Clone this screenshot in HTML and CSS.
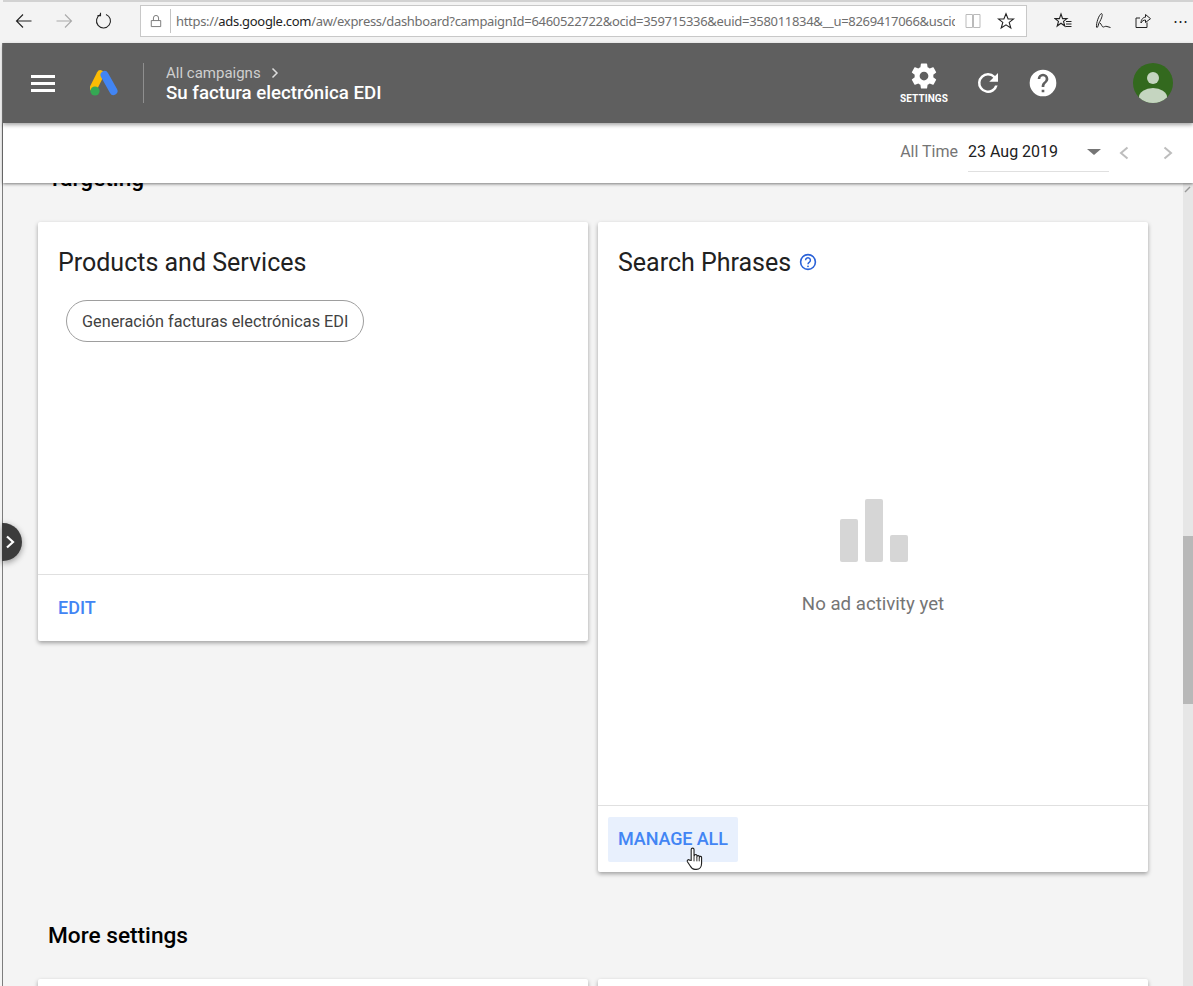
FILE: index.html
```html
<!DOCTYPE html>
<html lang="en">
<head>
<meta charset="utf-8">
<title>Su factura electrónica EDI</title>
<link rel="stylesheet" href="styles.css">
</head>
<body>
<div class="window">
  <div class="tabstrip"></div>
  <div class="toolbar">
    <div class="nav">
      <svg class="nav-icon" viewBox="0 0 18 18"><path d="M16.5 9H1.5M8 2.5L1.500 9L8 15.5" fill="none" stroke="#222" stroke-width="1.1"/></svg>
      <svg class="nav-icon" viewBox="0 0 18 18"><path d="M1.5 9H16.5M10 2.5L16.5 9L10 15.5" fill="none" stroke="#aaa" stroke-width="1.1"/></svg>
      <svg class="nav-icon" viewBox="0 0 18 18"><path d="M5.500 2.600A7 7 0 1 0 11 2.400M5.500 0.800V3.600H2.500" fill="none" stroke="#222" stroke-width="1.1"/></svg>
    </div>
    <div class="address">
      <svg class="lock" viewBox="0 0 14 16"><path d="M1.500 7.500H12.500V14.500H1.500ZM4 7.500V4.500A3 3 0 0 1 10 4.500V7.500" fill="none" stroke="#777" stroke-width="1.1"/></svg>
      <div class="url"><span class="url-dim">https://</span>ads.google.com<span class="url-dim">/aw/express/dashboard?campaignId=6460522722&amp;ocid=359715336&amp;euid=358011834&amp;__u=8269417066&amp;uscic</span></div>
      <svg class="book" viewBox="0 0 16 16"><path d="M1 1.500H7.500V14.500H1ZM8.500 1.500H15V14.500H8.500Z" fill="none" stroke="#bbb" stroke-width="1"/></svg>
      <svg class="star" viewBox="0 0 18 18"><path d="M9 1.800L11.100 7H16.600L12.200 10.400L13.800 16L9 12.800L4.200 16L5.800 10.400L1.400 7H6.900Z" fill="none" stroke="#222" stroke-width="1.1"/></svg>
    </div>
    <div class="tools">
      <svg class="tool" viewBox="0 0 18 18"><path d="M7 2L8.600 6.600H13L9.500 9.400L10.800 14L7 11.200L3.200 14L4.500 9.400L1 6.600H5.400Z" fill="none" stroke="#222" stroke-width="1.1"/><path d="M12 9.500H17.500M12 12H17.500M11.500 14.500H17.500" stroke="#222" stroke-width="1"/></svg>
      <svg class="tool" viewBox="0 0 18 18"><path d="M2.500 15.500C2 11 5 2.500 7.500 1.500C9 2 8 6 5 11L3.500 15.500M6 11C7.500 12 8 15.500 9.500 15C11 14.500 11.500 14 13 14.500L16.500 15.500" fill="none" stroke="#222" stroke-width="1"/></svg>
      <svg class="tool" viewBox="0 0 18 18"><path d="M13 10.500V15.500H2V6H6M7 11C7 7 9.500 5.200 11.500 5.200V2.500L16.500 6.700L11.500 10.500V8C9.500 8 8 9 7 11Z" fill="none" stroke="#222" stroke-width="1"/></svg>
      <span class="more">⋯</span>
    </div>
  </div>

  <div class="main">
    <header class="appbar">
      <button class="menu" type="button" aria-label="Menu"><span></span><span></span><span></span></button>
      <svg class="logo" viewBox="0 0 28 26">
        <path d="M10.500 4L3.500 18" stroke="#fbbc04" stroke-width="7.5" stroke-linecap="round"/>
        <path d="M14.500 5L23.500 21" stroke="#4285f4" stroke-width="8" stroke-linecap="round"/>
        <circle cx="5" cy="21" r="4.6" fill="#34a853"/>
      </svg>
      <div class="crumbs">
        <div class="crumb-top">All campaigns <svg class="crumb-chev" viewBox="0 0 8 12"><path d="M1.500 1.500L6 6L1.500 10.500" fill="none" stroke="#ddd" stroke-width="1.5"/></svg></div>
        <div class="crumb-title">Su factura electrónica EDI</div>
      </div>
      <div class="actions">
        <div class="settings">
          <svg class="gear" viewBox="0 0 24 24"><path fill="#fff" d="M19.43 12.98c.04-.32.07-.64.07-.98s-.03-.66-.07-.98l2.11-1.65c.19-.15.24-.42.12-.64l-2-3.46c-.12-.22-.39-.3-.61-.22l-2.49 1c-.52-.4-1.08-.73-1.69-.98l-.38-2.65C14.46 2.18 14.25 2 14 2h-4c-.25 0-.46.18-.49.42l-.38 2.65c-.61.25-1.17.59-1.69.98l-2.49-1c-.23-.09-.49 0-.61.22l-2 3.46c-.13.22-.07.49.12.64l2.11 1.65c-.04.32-.07.65-.07.98s.03.66.07.98l-2.11 1.65c-.19.15-.24.42-.12.64l2 3.46c.12.22.39.3.61.22l2.49-1c.52.4 1.08.73 1.69.98l.38 2.65c.03.24.24.42.49.42h4c.25 0 .46-.18.49-.42l.38-2.65c.61-.25 1.17-.59 1.69-.98l2.49 1c.23.09.49 0 .61-.22l2-3.46c.12-.22.07-.49-.12-.64l-2.11-1.65zM12 15.500c-1.93 0-3.5-1.57-3.5-3.5s1.57-3.5 3.500-3.500 3.500 1.570 3.500 3.500-1.570 3.500-3.500 3.500z"/></svg>
          <span class="settings-label">SETTINGS</span>
        </div>
        <svg class="refresh" viewBox="0 0 24 24"><path fill="#fff" d="M17.65 6.35A7.95 7.95 0 0 0 12 4a8 8 0 1 0 7.73 10h-2.08A6 6 0 1 1 12 6c1.66 0 3.14.69 4.22 1.78L13 11h7V4l-2.35 2.35z"/></svg>
        <svg class="help" viewBox="0 0 24 24"><path fill="#fff" d="M12 2a10 10 0 1 0 0 20 10 10 0 0 0 0-20zm1 17h-2v-2h2v2zm2.07-7.750l-.9.920C13.450 12.900 13 13.500 13 15h-2v-.5c0-1.100.450-2.100 1.170-2.830l1.240-1.260c.370-.360.590-.860.590-1.410a2 2 0 0 0-4 0H8a4 4 0 0 1 8 0c0 .880-.360 1.680-.930 2.250z"/></svg>
        <div class="avatar"><span class="avatar-head"></span><span class="avatar-body"></span></div>
      </div>
    </header>

    <div class="datebar">
      <span class="range-label">All Time</span>
      <div class="date-select"><span>23 Aug 2019</span><span class="caret"></span></div>
      <svg class="pager" viewBox="0 0 12 16"><path d="M9.500 2.500L3 8L9.500 13.500" fill="none" stroke="#bdbdbd" stroke-width="2"/></svg>
      <svg class="pager pager-next" viewBox="0 0 12 16"><path d="M2.500 2.500L9 8L2.500 13.500" fill="none" stroke="#bdbdbd" stroke-width="2"/></svg>
    </div>

    <div class="viewport">
      <div class="content">
        <h2 class="section-title section-first">Targeting</h2>
        <div class="cards">
          <section class="card card-left">
            <div class="card-body">
              <h3 class="card-title">Products and Services</h3>
              <span class="chip">Generación facturas electrónicas EDI</span>
            </div>
            <div class="card-foot"><a class="action">EDIT</a></div>
          </section>
          <section class="card card-right">
            <div class="card-body">
              <h3 class="card-title">Search Phrases
                <svg class="info" viewBox="0 0 18 18"><circle cx="9" cy="9" r="7.4" fill="none" stroke="#2a62d8" stroke-width="1.6"/><path d="M6.600 7.200a2.400 2.400 0 1 1 3.800 2C9.500 9.800 9 10.300 9 11.300" fill="none" stroke="#2a62d8" stroke-width="1.500"/><circle cx="9" cy="13.300" r=".9" fill="#2a62d8"/></svg>
              </h3>
              <div class="empty">
                <div class="bars"><span class="bar bar-a"></span><span class="bar bar-b"></span><span class="bar bar-c"></span></div>
                <p class="empty-text">No ad activity yet</p>
              </div>
            </div>
            <div class="card-foot card-foot-btn">
              <a class="action action-hover">MANAGE ALL
                <svg class="cursor" viewBox="0 0 18 26"><path d="M5.500 15V3.500a1.500 1.500 0 0 1 3 0V11l.5-1.500a1.400 1.400 0 0 1 2.500 0l.2 1a1.300 1.300 0 0 1 2.300.2l.2.8a1.200 1.200 0 0 1 2.300.5V18c0 3.500-2 6.500-5.500 6.500H9.500C7 24.500 5.500 23 4.500 21L1.500 16.500c-.8-1.500 1-3 2.300-1.700Z" fill="#fff" stroke="#222" stroke-width="1.200"/><path d="M8.500 11v5M11.500 11v5M14 12v4" stroke="#222" stroke-width="1"/></svg>
              </a>
            </div>
          </section>
        </div>
        <h2 class="section-title section-more">More settings</h2>
        <div class="cards">
          <section class="card card-stub"></section>
          <section class="card card-stub"></section>
        </div>
      </div>
      <div class="scrollbar">
        <svg class="scroll-arrow" viewBox="0 0 10 10"><path d="M2 7L7 2" stroke="#999" stroke-width="1.500"/></svg>
        <div class="scroll-thumb"></div>
      </div>
    </div>

    <button class="rail-toggle" type="button" aria-label="Expand"><svg viewBox="0 0 12 16"><path d="M3 2.500L9 8L3 13.500" fill="none" stroke="#fff" stroke-width="2.200"/></svg></button>
  </div>
</div>
</body>
</html>
```
FILE: styles.css
```css
* { box-sizing: border-box; }
html, body { margin: 0; height: 100%; overflow: hidden; }
body { font-family: Roboto, "Liberation Sans", sans-serif; background: #f4f4f4; color: #212121; }
svg { display: block; flex: none; }

.window { width: 1193px; height: 986px; display: flex; flex-direction: column; }

.tabstrip { height: 2px; background: #d2d2d2; margin-left: 3px; }
.toolbar { height: 41px; background: #f3f3f3; display: flex; align-items: center; padding-left: 15px; padding-bottom: 3px; }
.nav { display: flex; gap: 22px; width: 125px; }
.nav-icon { width: 18px; height: 18px; }
.address { width: 887px; height: 32px; background: #fff; border: 1px solid #c8c8c8; display: flex; align-items: center; padding-left: 9px; }
.lock { width: 12px; height: 14px; }
.url { width: 785px; margin-left: 8px; padding-left: 5px; border-left: 1px solid #c4c4c4; font: 13px/24px "Noto Sans", "Open Sans", sans-serif; letter-spacing: -.31px; color: #222; white-space: nowrap; overflow: hidden; }
.url-dim { color: #6e6e6e; }
.book { width: 16px; height: 16px; margin-left: 10px; }
.star { width: 18px; height: 18px; margin-left: 16px; }
.tools { display: flex; align-items: center; gap: 22px; margin-left: 27px; }
.tool { width: 18px; height: 18px; }
.more { width: 18px; font-size: 15px; color: #222; margin-left: -1px; white-space: nowrap; }

.main { position: relative; flex: 1; min-height: 0; display: flex; flex-direction: column; margin-left: 2px; border-left: 1px solid #7d7d7d; }
.appbar { position: relative; z-index: 3; height: 80px; flex: none; background: #5f5f5f; display: flex; align-items: center; color: #fff; box-shadow: 0 2px 4px rgba(0,0,0,.35); }
.menu { width: 24px; height: 17px; margin-left: 28px; padding: 0; border: 0; background: none; display: flex; flex-direction: column; justify-content: space-between; }
.menu span { display: block; height: 3px; background: #fff; }
.logo { width: 28px; height: 26px; margin-left: 35px; }
.crumbs { margin-left: 25px; height: 40px; padding-left: 22px; border-left: 1px solid #8f8f8f; display: flex; flex-direction: column; justify-content: center; }
.crumb-top { display: flex; align-items: center; gap: 10px; font-size: 15px; line-height: 18px; color: #cfcfcf; padding-top: 1px; }
.crumb-chev { width: 8px; height: 12px; }
.crumb-title { font-size: 18.67px; line-height: 22px; font-weight: 500; color: #fff; }
.actions { display: flex; align-items: center; margin-left: auto; padding-right: 20px; }
.settings { width: 52px; display: flex; flex-direction: column; align-items: center; margin-right: 4px; }
.gear { width: 30px; height: 30px; }
.settings-label { font-size: 10px; line-height: 12px; font-weight: 700; letter-spacing: .1px; margin-top: 2px; white-space: nowrap; }
.refresh { width: 30px; height: 30px; margin-left: 19px; }
.help { width: 32px; height: 32px; margin-left: 24px; }
.avatar { position: relative; width: 40px; height: 40px; border-radius: 50%; background: #33691e; overflow: hidden; margin-left: 74px; }
.avatar-head { position: absolute; left: 14px; top: 9px; width: 12px; height: 12px; border-radius: 50%; background: #c5d5c0; }
.avatar-body { position: absolute; left: 6px; top: 25px; width: 28px; height: 18px; border-radius: 50%; background: #c5d5c0; }

.datebar { position: relative; z-index: 2; height: 60px; flex: none; background: #fff; display: flex; align-items: center; justify-content: flex-end; box-shadow: 0 1px 3px rgba(0,0,0,.5); padding-right: 19px; }
.range-label { font-size: 16px; color: #757575; margin-right: 10px; margin-bottom: 3px; }
.date-select { width: 141px; height: 40px; display: flex; align-items: center; justify-content: space-between; font-size: 16px; color: #212121; border-bottom: 1px solid #e0e0e0; padding-right: 8px; margin-bottom: 2px; }
.date-select span:first-child { margin-top: -1px; }
.caret { width: 0; height: 0; border-left: 7px solid transparent; border-right: 7px solid transparent; border-top: 6px solid #757575; }
.pager { width: 12px; height: 16px; margin-left: 9px; }
.pager-next { margin-left: 32px; }

.viewport { flex: 1; min-height: 0; display: flex; overflow: hidden; }
.content { flex: 1; min-width: 0; padding: 0 35px 0 35px; }
.section-title { margin: 0; font-size: 22.67px; line-height: 28px; font-weight: 500; color: #000; padding-left: 10px; }
.section-first { margin-top: -18px; }
.section-more { margin-top: 50px; }
.cards { display: flex; gap: 10px; align-items: flex-start; margin-top: 29px; }
.section-more + .cards { margin-top: 29px; }
.card { width: 550px; background: #fff; border-radius: 2px; box-shadow: 0 2px 4px rgba(0,0,0,.35); display: flex; flex-direction: column; }
.card-left { height: 419px; }
.card-right { height: 650px; }
.card-stub { height: 120px; }
.card-body { flex: 1; padding: 27px 20px 0; display: flex; flex-direction: column; align-items: flex-start; min-height: 0; }
.card-title { margin: 0; display: flex; align-items: center; gap: 8px; font-size: 25px; line-height: 28px; font-weight: 400; color: #212121; }
.info { width: 18px; height: 18px; margin-top: -2px; }
.chip { margin: 23px 0 0 8px; height: 42px; padding: 0 15px; display: flex; align-items: center; border: 1px solid #9e9e9e; border-radius: 21px; font-size: 16.25px; color: #424242; white-space: nowrap; }
.empty { align-self: stretch; display: flex; flex-direction: column; align-items: center; margin-top: 222px; }
.bars { display: flex; align-items: flex-end; gap: 7px; height: 63px; margin-left: 1px; }
.bar { display: block; width: 18px; background: #d6d6d6; border-radius: 2px; }
.bar-a { height: 43px; }
.bar-b { height: 63px; }
.bar-c { height: 27px; }
.empty-text { margin: 31px 0 0; font-size: 18.67px; line-height: 22px; color: #757575; }
.card-foot { height: 67px; flex: none; border-top: 1px solid #e0e0e0; display: flex; align-items: center; padding-left: 20px; }
.card-foot-btn { padding-left: 10px; }
.action { position: relative; font-size: 18px; font-weight: 500; color: #4285f4; margin-top: -2px; }
.action-hover { display: flex; align-items: center; height: 45px; padding: 0 10px 2px; background: #e8f0fd; border-radius: 2px; letter-spacing: -.1px; margin-top: 0; }
.cursor { position: absolute; left: 78px; top: 29px; width: 17px; height: 25px; }

.scrollbar { position: relative; width: 10px; flex: none; background: #e6e6e6; }
.scroll-arrow { width: 10px; height: 10px; margin-top: 2px; }
.scroll-thumb { position: absolute; left: 0; right: 0; top: 353px; height: 168px; background: #b8b8b8; }

.rail-toggle { position: absolute; z-index: 4; left: -1px; top: 480px; width: 20px; height: 38px; padding: 0 0 0 2px; border: 0; background: #3c3c3c; border-radius: 0 19px 19px 0; box-shadow: 0 2px 6px rgba(0,0,0,.4); display: flex; align-items: center; }
.rail-toggle svg { width: 12px; height: 16px; }
```
